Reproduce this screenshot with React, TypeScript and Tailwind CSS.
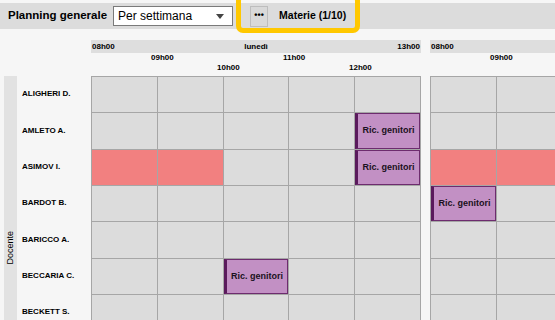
import React from 'react';

type Cell = 'empty' | 'red' | 'event';

interface Row {
  name: string;
  day1: Cell[];
  day2: Cell[];
}

const E: Cell = 'empty';
const R: Cell = 'red';
const V: Cell = 'event';

const rows: Row[] = [
  { name: 'ALIGHERI D.', day1: [E, E, E, E, E], day2: [E, E, E, E, E] },
  { name: 'AMLETO A.', day1: [E, E, E, E, V], day2: [E, E, E, E, E] },
  { name: 'ASIMOV I.', day1: [R, R, E, E, V], day2: [R, R, E, E, E] },
  { name: 'BARDOT B.', day1: [E, E, E, E, E], day2: [V, E, E, E, E] },
  { name: 'BARICCO A.', day1: [E, E, E, E, E], day2: [E, E, E, E, E] },
  { name: 'BECCARIA C.', day1: [E, E, V, E, E], day2: [E, E, E, E, E] },
  { name: 'BECKETT S.', day1: [E, E, E, E, E], day2: [E, E, E, E, E] },
];

function DayBlock({ day, label }: { day: 'day1' | 'day2'; label?: string }) {
  return (
    <div className="w-[330px] shrink-0 flex flex-col">
      {/* Day bar */}
      <div className="h-[13px] bg-[#dedede] flex items-center justify-between px-[1px] text-[8px] leading-none font-bold">
        <span>08h00</span>
        {label && <span>{label}</span>}
        {label ? <span>13h00</span> : <span />}
      </div>

      {/* Hour labels */}
      <div className="h-[23px] grid grid-cols-5 text-[8px] leading-[10px] font-bold">
        <div />
        <div className="-ml-[6px]">09h00</div>
        {label ? <div className="-ml-[6px] mt-[10px]">10h00</div> : <div />}
        {label ? <div className="-ml-[6px]">11h00</div> : <div />}
        {label ? <div className="-ml-[6px] mt-[10px]">12h00</div> : <div />}
      </div>

      {/* Grid */}
      <div className="border-t border-l border-[#a6a6a6]">
        {rows.map((row) => (
          <div key={row.name} className="grid grid-cols-5 h-[36.35px]">
            {row[day].map((cell, i) => (
              <div
                key={i}
                className={`border-r border-b border-[#a6a6a6] ${
                  cell === 'red' ? 'bg-[#f28080]' : 'bg-[#dcdcdc]'
                }`}
              >
                {cell === 'event' && (
                  <div className="h-full bg-[#c290c4] border border-[#6d2c6e] border-l-[3px] border-l-[#5a1a5c] flex items-center justify-center text-[9px] font-bold text-[#1a1020]">
                    Ric. genitori
                  </div>
                )}
              </div>
            ))}
          </div>
        ))}
      </div>
    </div>
  );
}

export default function App() {
  return (
    <div className="w-[555px] h-[320px] overflow-hidden relative bg-[#f6f6f6] text-black font-['Liberation_Sans',Arial,sans-serif]">
      {/* Toolbar */}
      <div className="mt-[3px] h-[26px] bg-[#dcdcdc] flex items-center pl-[8px]">
        <span className="text-[11.5px] font-bold">Planning generale</span>
        <div className="ml-[6px] w-[120px] h-[20px] bg-white border border-[#7a7a7a] flex items-center justify-between pl-[4px] pr-[8px]">
          <span className="text-[12px]">Per settimana</span>
          <svg width="8" height="5" viewBox="0 0 8 5">
            <path d="M0 0h8L4 5z" fill="#444" />
          </svg>
        </div>
        <button className="ml-[17px] w-[18px] h-[21px] border border-[#bdbdbd] bg-[#d9d9d9] flex items-center justify-center text-[9px] font-bold leading-none pb-[2px]">
          •••
        </button>
        <span className="ml-[11px] text-[10.5px] font-bold">Materie (1/10)</span>
      </div>

      {/* Highlight ring */}
      <div className="absolute left-[236px] top-[-6px] w-[124px] h-[39px] border-[5px] border-[#ffc800] rounded-[7px]" />

      {/* Planner */}
      <div className="flex mt-[11px]">
        <div className="w-[91px] shrink-0 flex flex-col">
          <div className="h-[36px]" />
          <div className="flex">
            <div className="ml-[4px] w-[13px] bg-[#e2e2e2] flex items-start justify-center pt-[155px]">
              <span className="[writing-mode:vertical-rl] rotate-180 text-[9px] leading-none">Docente</span>
            </div>
            <div className="flex-1 flex flex-col pl-[5px]">
              {rows.map((row) => (
                <div key={row.name} className="h-[36.35px] flex items-center text-[8px] font-bold">
                  {row.name}
                </div>
              ))}
            </div>
          </div>
        </div>
        <DayBlock day="day1" label="lunedì" />
        <div className="w-[9px] shrink-0" />
        <DayBlock day="day2" />
      </div>
    </div>
  );
}
